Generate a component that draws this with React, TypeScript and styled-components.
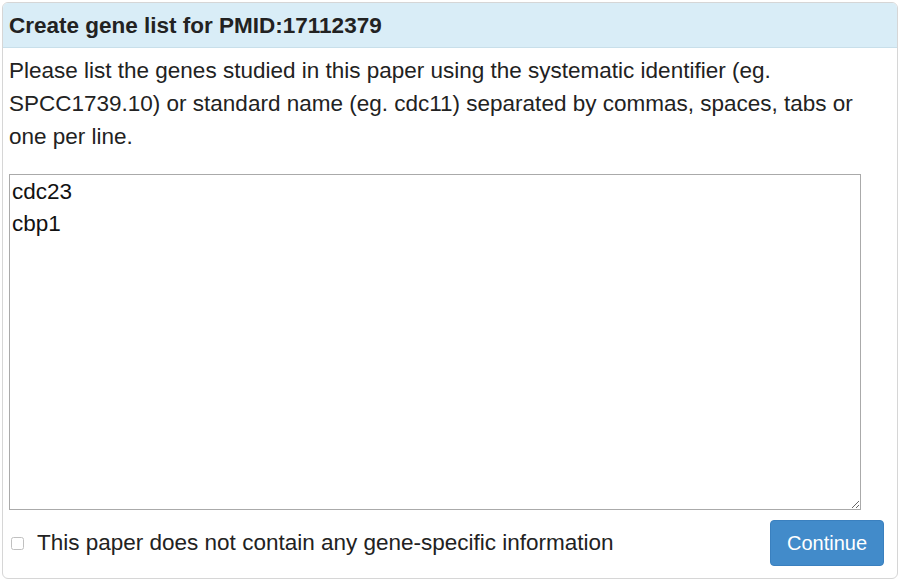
import { FC } from 'react';
import styled, { createGlobalStyle } from 'styled-components';

const GlobalStyle = createGlobalStyle`
  html, body {
    margin: 0;
    padding: 0;
    background: #ffffff;
  }

  body {
    font-family: "Liberation Sans", Arial, Helvetica, sans-serif;
    color: #333333;
  }

  * {
    box-sizing: border-box;
  }
`;

const Page = styled.div`
  padding: 2px;
`;

const Panel = styled.div`
  width: 896px;
  height: 577px;
  border: 1px solid #d6d6d6;
  border-radius: 6px;
  overflow: hidden;
  display: flex;
  flex-direction: column;
  background: #ffffff;
`;

const PanelHeading = styled.div`
  height: 46px;
  padding: 1px 6px 0;
  display: flex;
  align-items: center;
  background: #d9edf7;
  border-bottom: 1px solid #c8dfea;
  color: #222222;
  font-size: 22.5px;
  font-weight: bold;
`;

const PanelBody = styled.div`
  flex: 1;
  display: flex;
  flex-direction: column;
  padding: 6px 13px 12px 6px;
`;

const Intro = styled.p`
  margin: 0;
  font-size: 22.5px;
  line-height: 33px;
  color: #222222;
`;

const GeneInput = styled.textarea`
  margin-top: 21px;
  width: 852px;
  height: 336px;
  padding: 1px 2px;
  border: 1px solid #aaaaaa;
  border-radius: 0;
  font-family: "Liberation Sans", Arial, Helvetica, sans-serif;
  font-size: 22.5px;
  line-height: 32px;
  color: #111111;
  outline: none;
`;

const Footer = styled.div`
  margin-top: 10px;
  display: flex;
  align-items: center;
  justify-content: space-between;
`;

const CheckLabel = styled.label`
  display: flex;
  align-items: center;
  gap: 13px;
  padding-left: 2px;
  font-size: 22.5px;
  color: #222222;
`;

const Checkbox = styled.input`
  margin: 0;
  width: 13px;
  height: 13px;
  opacity: 0.45;
`;

const ContinueButton = styled.button`
  width: 114px;
  height: 46px;
  border: 1px solid #3a80bf;
  border-radius: 4px;
  background: #428bca;
  color: #ffffff;
  font-family: "Liberation Sans", Arial, Helvetica, sans-serif;
  font-size: 20px;
  cursor: pointer;
`;

const App: FC = () => (
  <>
    <GlobalStyle />
    <Page>
      <Panel>
        <PanelHeading>Create gene list for PMID:17112379</PanelHeading>
        <PanelBody>
          <Intro>
            Please list the genes studied in this paper using the systematic identifier (eg.
            SPCC1739.10) or standard name (eg. cdc11) separated by commas, spaces, tabs or one
            per line.
          </Intro>
          <GeneInput defaultValue={'cdc23\ncbp1'} />
          <Footer>
            <CheckLabel>
              <Checkbox type="checkbox" />
              This paper does not contain any gene-specific information
            </CheckLabel>
            <ContinueButton type="button">Continue</ContinueButton>
          </Footer>
        </PanelBody>
      </Panel>
    </Page>
  </>
);

export default App;
